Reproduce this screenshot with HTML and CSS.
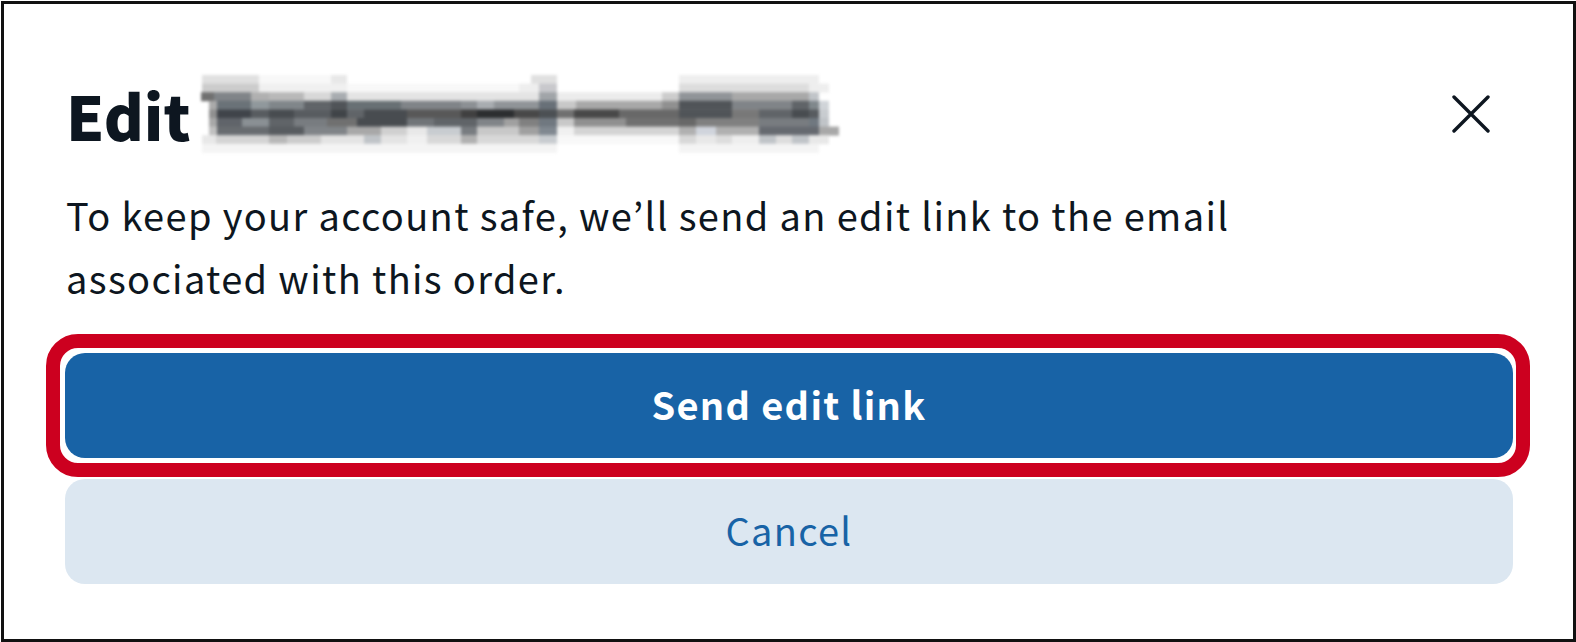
FILE: index.html
```html
<!DOCTYPE html>
<html lang="en">
<head>
  <meta charset="UTF-8" />
  <title>Edit order</title>
  <link rel="stylesheet" href="styles.css">
</head>
<body>
  <div class="modal">
    <div class="modal-header">
      <h1>Edit</h1>
      <svg class="redacted" xmlns="http://www.w3.org/2000/svg" viewBox="0 0 640 78">
        <g>
          <rect x="1" width="57" fill="#e0e0e0"/><rect x="58" width="72" fill="#f8f8f8"/><rect x="130" width="16" fill="#e8e8e8"/>
          <rect x="330" width="26" fill="#e0e0e0"/><rect x="478" width="140" fill="#eeeeee"/>
        </g>
        <g transform="translate(0 8.6)">
          <rect x="1" width="57" fill="#cccccc"/><rect x="58" width="88" fill="#f0f0f0"/><rect x="146" width="172" fill="#f8f8f8"/>
          <rect x="318" width="20" fill="#eeeeee"/><rect x="338" width="18" fill="#c8c8cc"/><rect x="478" width="130" fill="#dddddd"/><rect x="608" width="20" fill="#eeeeee"/>
        </g>
        <g transform="translate(0 17.2)">
          <rect x="0" width="13" fill="#707070"/><rect x="13" width="37" fill="#808488"/><rect x="50" width="18" fill="#b0b0b0"/><rect x="68" width="35" fill="#b8b8b8"/>
          <rect x="103" width="27" fill="#d8d8d8"/><rect x="130" width="16" fill="#a8acb0"/><rect x="146" width="192" fill="#e4e4e4"/><rect x="338" width="18" fill="#a0a4a8"/>
          <rect x="356" width="105" fill="#ececec"/><rect x="461" width="17" fill="#cccccc"/><rect x="478" width="53" fill="#909498"/><rect x="531" width="77" fill="#a8a8a8"/><rect x="608" width="10" fill="#c0c4c8"/>
        </g>
        <g transform="translate(0 25.8)">
          <rect x="8" width="8" fill="#aaaaaa"/><rect x="16" width="34" fill="#6a7278"/><rect x="50" width="18" fill="#90989c"/><rect x="68" width="35" fill="#80868a"/>
          <rect x="103" width="27" fill="#606468"/><rect x="130" width="16" fill="#505458"/><rect x="146" width="54" fill="#687074"/><rect x="200" width="60" fill="#808488"/>
          <rect x="260" width="16" fill="#8c9094"/><rect x="276" width="17" fill="#a8acb0"/><rect x="293" width="45" fill="#909498"/><rect x="338" width="18" fill="#687078"/>
          <rect x="356" width="19" fill="#c8c8c8"/><rect x="375" width="86" fill="#a8a8a8"/><rect x="461" width="17" fill="#909090"/><rect x="478" width="53" fill="#505458"/>
          <rect x="531" width="60" fill="#808488"/><rect x="591" width="17" fill="#606468"/><rect x="608" width="10" fill="#80888c"/><rect x="618" width="10" fill="#d0d4d8"/>
        </g>
        <g transform="translate(0 34.4)">
          <rect x="8" width="8" fill="#909090"/><rect x="16" width="34" fill="#40444a"/><rect x="50" width="18" fill="#585c60"/><rect x="68" width="25" fill="#484c50"/>
          <rect x="93" width="37" fill="#585c60"/><rect x="130" width="16" fill="#404448"/><rect x="146" width="17" fill="#606468"/><rect x="163" width="43" fill="#484c50"/>
          <rect x="206" width="54" fill="#585858"/><rect x="260" width="16" fill="#404040"/><rect x="276" width="37" fill="#2c2e30"/><rect x="313" width="25" fill="#484848"/>
          <rect x="338" width="18" fill="#4c5054"/><rect x="356" width="17" fill="#707070"/><rect x="373" width="45" fill="#484848"/><rect x="418" width="60" fill="#686868"/>
          <rect x="478" width="53" fill="#505458"/><rect x="531" width="27" fill="#787878"/><rect x="558" width="33" fill="#606468"/><rect x="591" width="17" fill="#484c50"/>
          <rect x="608" width="10" fill="#585c60"/><rect x="618" width="10" fill="#c8ccd0"/>
        </g>
        <g transform="translate(0 43)">
          <rect x="8" width="8" fill="#a8a8a8"/><rect x="16" width="25" fill="#60646a"/><rect x="41" width="27" fill="#8a9094"/><rect x="68" width="25" fill="#606468"/>
          <rect x="93" width="33" fill="#787c80"/><rect x="126" width="30" fill="#707070"/><rect x="156" width="50" fill="#484c50"/><rect x="206" width="27" fill="#707478"/>
          <rect x="233" width="43" fill="#606468"/><rect x="276" width="27" fill="#808488"/><rect x="303" width="15" fill="#a0a0a0"/><rect x="318" width="20" fill="#808080"/>
          <rect x="338" width="18" fill="#707880"/><rect x="356" width="17" fill="#c8c8c8"/><rect x="373" width="52" fill="#909090"/><rect x="425" width="53" fill="#707070"/>
          <rect x="478" width="17" fill="#686868"/><rect x="495" width="63" fill="#808080"/><rect x="558" width="50" fill="#787c80"/><rect x="608" width="10" fill="#707880"/><rect x="618" width="10" fill="#c0c4c8"/>
        </g>
        <g transform="translate(0 51.6)">
          <rect x="8" width="8" fill="#c0c0c0"/><rect x="16" width="52" fill="#686c70"/><rect x="68" width="35" fill="#585c60"/><rect x="103" width="43" fill="#808488"/>
          <rect x="146" width="34" fill="#a8a8a8"/><rect x="180" width="26" fill="#d0d0d0"/><rect x="206" width="20" fill="#e8e8e8"/><rect x="226" width="34" fill="#c8ccd0"/>
          <rect x="260" width="16" fill="#787c80"/><rect x="276" width="42" fill="#c8c8c8"/><rect x="318" width="20" fill="#a0a0a0"/><rect x="338" width="18" fill="#808890"/>
          <rect x="356" width="17" fill="#f0f0f0"/><rect x="373" width="105" fill="#d4d4d4"/><rect x="478" width="17" fill="#b0b0b0"/><rect x="495" width="20" fill="#d0d4dc"/>
          <rect x="515" width="43" fill="#b0b0b0"/><rect x="558" width="60" fill="#666a70"/><rect x="618" width="20" fill="#a8a8a8"/>
        </g>
        <g transform="translate(0 60.2)">
          <rect x="1" width="14" fill="#e8e8e8"/><rect x="15" width="53" fill="#d4d4d4"/><rect x="68" width="18" fill="#b8b8b8"/><rect x="86" width="34" fill="#cccccc"/>
          <rect x="120" width="43" fill="#e4e4e4"/><rect x="163" width="17" fill="#c0c4c8"/><rect x="180" width="26" fill="#e4e4e4"/><rect x="206" width="20" fill="#f0f0f0"/>
          <rect x="226" width="34" fill="#d8d8d8"/><rect x="260" width="16" fill="#b0b0b0"/><rect x="276" width="62" fill="#d8d8d8"/><rect x="338" width="18" fill="#c8ccd0"/>
          <rect x="356" width="122" fill="#f8f8f8"/><rect x="478" width="17" fill="#d8d8d8"/><rect x="495" width="20" fill="#e8e8e8"/><rect x="515" width="16" fill="#dddddd"/>
          <rect x="531" width="27" fill="#eeeeee"/><rect x="558" width="17" fill="#c0c4c8"/><rect x="575" width="16" fill="#dddddd"/><rect x="591" width="17" fill="#c0c4c8"/><rect x="608" width="20" fill="#e8e8e8"/>
        </g>
        <g transform="translate(0 68.8)">
          <rect x="1" width="355" fill="#f4f4f4"/><rect x="478" width="140" fill="#f4f4f4"/>
        </g>
      </svg>
      <svg class="close-icon" xmlns="http://www.w3.org/2000/svg" viewBox="0 0 38 38">
        <path d="M2 2L36 36M36 2L2 36" stroke-width="3.4" stroke-linecap="round"/>
      </svg>
    </div>
    <p>To keep your account safe, we’ll send an edit link to the email associated with this order.</p>
    <button class="send-btn">Send edit link</button>
    <button class="cancel-btn">Cancel</button>
  </div>
</body>
</html>
```

FILE: styles.css
```css
html, body {
  margin: 0;
  height: 100%;
  background-color: #fff;
}
body {
  font-family: "Noto Sans CJK JP", "Source Sans Pro", sans-serif;
  color: #0d1620;
  overflow: hidden;
}
.modal {
  box-sizing: border-box;
  width: 1575px;
  height: 641px;
  margin: 1px 0 0 1px;
  padding: 0 60px 0 61px;
  border: 3px solid #111;
}
.modal-header {
  display: flex;
  align-items: center;
  height: 106px;
  padding-top: 57px;
}
h1 {
  margin: 0 10px 0 1px;
  font-size: 61px;
  line-height: 1;
  font-weight: 900;
}
.redacted {
  flex: none;
  width: 640px;
  height: 78px;
  filter: blur(1.4px);
}
.redacted rect {
  height: 9px;
}
.close-icon {
  width: 38px;
  height: 38px;
  margin-left: auto;
  margin-right: 23px;
  stroke: #0d1620;
  fill: none;
}
p {
  margin: 17px 0 0 1px;
  max-width: 1225px;
  font-size: 38px;
  line-height: 62.5px;
  letter-spacing: 1.35px;
}
button {
  display: block;
  width: 100%;
  height: 105px;
  padding: 0 0 4px 0;
  border: none;
  border-radius: 20px;
  font-family: inherit;
  font-size: 38px;
  letter-spacing: 1.3px;
}
.send-btn {
  position: relative;
  margin-top: 44px;
  background-color: #1863a6;
  color: #fff;
  font-weight: 700;
}
/* red highlight drawn round the button */
.send-btn::after {
  content: "";
  position: absolute;
  top: -19px;
  right: -17px;
  bottom: -19px;
  left: -19px;
  border: 14px solid #cc001f;
  border-radius: 32px;
}
.cancel-btn {
  margin-top: 21px;
  background-color: #dce7f1;
  color: #1863a6;
}
```
